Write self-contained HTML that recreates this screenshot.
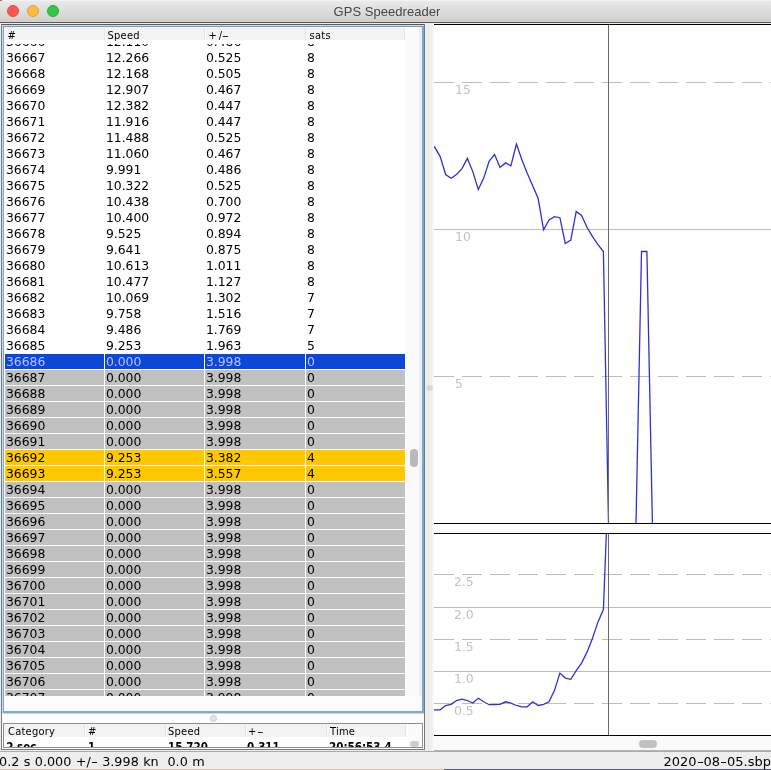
<!DOCTYPE html>
<html><head><meta charset="utf-8"><title>GPS Speedreader</title>
<style>
html,body{margin:0;padding:0}
body{width:771px;height:770px;position:relative;overflow:hidden;background:#ececec;font-family:"DejaVu Sans","Liberation Sans",sans-serif;font-size:13px;color:#000}
div,i,span{position:absolute;box-sizing:border-box;font-style:normal;white-space:nowrap}
#tb{left:0;top:0;width:771px;height:23px;background:linear-gradient(#f6f6f6 0,#e9e9e9 1.5px,#d6d6d6 17px,#d4d0cc 19px);border-bottom:1px solid #5c5c5c}
#tt{left:1.5px;width:771px;top:3px;height:18px;line-height:18px;text-align:center;font-family:"Liberation Sans",sans-serif;font-size:13px;color:#464646;letter-spacing:.05px}
.tl{top:5px;width:12px;height:12px;border-radius:50%}
#lp{left:1px;top:24px;width:424px;height:726px;border:1px solid #747a80;border-top-color:#505c69;background:#fff}
#fr{left:2px;top:25px;width:422px;height:689px;border:1px solid #c9dcee;background:#fff}
#fr2{left:3px;top:26px;width:421px;height:687px;border:1px solid #7fa6d0;border-top-color:#8399ae;border-right-width:2px;border-bottom-width:2px;background:#fff}
#vp{left:4px;top:27px;width:402px;height:669px;overflow:hidden;background:#fff}
#hd{left:0;top:0;width:402px;height:17px;background:linear-gradient(#f3f3f3 0,#f3f3f3 12.5px,#fff 13.5px);z-index:5}
.h{top:1px;height:16px;line-height:16px;font-size:11px;letter-spacing:.25px;font-family:"DejaVu Sans Condensed","DejaVu Sans",sans-serif}
.hy{display:inline-block;font-weight:normal;transform:scaleX(1.9);transform-origin:0 50%}
.hw{position:static;display:inline-block;font-weight:normal;width:7px;text-align:center;transform:scaleX(1.5)}
.hs{top:1px;width:1px;height:12px;background:#fbfbfb;border-left:1px solid #e4e4e4;width:2px}
.r{left:1px;width:400px;height:15px;line-height:15px;font-size:12.4px}
.r i{top:0;height:15px;padding-left:.9px}
.c1{left:0;width:99px}.c2{left:100px;width:99px}.c3{left:200px;width:100px}.c4{left:301px;width:99px}
.gry i{background:#c0c0c0}
.org i{background:#ffc800}
.sel i{background:#0c47d8;color:#b4c6ff}
#vs{left:406px;top:27px;width:16px;height:669px;background:#fafafa}
#vth{left:410px;top:449px;width:7.7px;height:18px;border-radius:4px;background:#bbb8be}
#hs{left:4px;top:696px;width:418px;height:15px;background:#fcfcfc}
#dv{left:2px;top:714px;width:422px;height:9px;background:#fdfdfd}
.dot{width:7px;height:7px;border-radius:50%;background:#e2e2e2;border:1px solid #cbcbcb}
#bp{left:3px;top:723px;width:420px;height:25px;border:1px solid #8e8e8e;background:#fff;overflow:hidden}
#bh .h{top:-.5px}
#bh{left:0;top:0;width:403px;height:16px;background:linear-gradient(#f3f3f3 0,#f3f3f3 13px,#fff 13px)}
.b{top:16.2px;font-weight:bold;height:15px;line-height:15px;font-size:11.5px;font-family:"DejaVu Sans Condensed","DejaVu Sans",sans-serif}
#sb{left:0;top:751px;width:771px;height:19px;background:#ededed;border-top:1px solid #ababab}
#sl{left:-1px;top:754px;height:16px;line-height:16px;font-size:12.8px;word-spacing:.3px}
#sr{right:0;top:754px;height:16px;line-height:16px}
#vd{left:425px;top:23px;width:9px;height:728px;background:linear-gradient(90deg,#e9eef5 0,#f1ebe4 35%,#eeeeee 65%,#fafafa 100%)}
#ch{left:434px;top:24px;width:337px;height:712px;background:#fff}
#cs{left:434px;top:736px;width:337px;height:15px;background:#fafafa;border-bottom:1px solid #b4b4b4}
#cth{left:639px;top:740px;width:18px;height:8px;border-radius:4px;background:#c1c1c1}
svg{position:absolute;left:0;top:0}
text{font-family:"DejaVu Sans",sans-serif;font-size:12.4px;fill:#c2c2c2}
</style></head><body>
<div id="root" style="left:0;top:0;width:771px;height:770px;will-change:transform">
<div id="tb"></div>
<div class="tl" style="left:7px;background:#fc5753;border:.5px solid #df4744"></div>
<div class="tl" style="left:27px;background:#fdbc40;border:.5px solid #de9f34"></div>
<div class="tl" style="left:47px;background:#33c748;border:.5px solid #27aa35"></div>
<div id="tt">GPS Speedreader</div>

<div id="lp"></div>
<div id="fr"></div>
<div id="fr2"></div>
<div id="vs"></div><div style="left:419px;top:27px;width:3px;height:684px;background:#e8f2fb"></div><div id="vth"></div>
<div id="hs"></div>
<div id="vp">
<div id="hd">
<span class="h" style="left:3.5px">#</span>
<span class="h" style="left:103.5px">Speed</span>
<span class="h" style="left:204.5px;letter-spacing:2px">+/<b class="hy" style="margin-left:-1.8px">-</b></span>
<span class="h" style="left:305.5px;letter-spacing:.3px">sats</span>
<div class="hs" style="left:99.5px"></div><div class="hs" style="left:199.5px"></div><div class="hs" style="left:301px"></div><div class="hs" style="left:400px"></div>
</div>
<div id="rows" style="left:0;top:-27px;width:402px;height:800px">
<div class="r" style="top:34px"><i class="c1">36666</i><i class="c2">12.110</i><i class="c3">0.486</i><i class="c4">8</i></div>
<div class="r" style="top:50px"><i class="c1">36667</i><i class="c2">12.266</i><i class="c3">0.525</i><i class="c4">8</i></div>
<div class="r" style="top:66px"><i class="c1">36668</i><i class="c2">12.168</i><i class="c3">0.505</i><i class="c4">8</i></div>
<div class="r" style="top:82px"><i class="c1">36669</i><i class="c2">12.907</i><i class="c3">0.467</i><i class="c4">8</i></div>
<div class="r" style="top:98px"><i class="c1">36670</i><i class="c2">12.382</i><i class="c3">0.447</i><i class="c4">8</i></div>
<div class="r" style="top:114px"><i class="c1">36671</i><i class="c2">11.916</i><i class="c3">0.447</i><i class="c4">8</i></div>
<div class="r" style="top:130px"><i class="c1">36672</i><i class="c2">11.488</i><i class="c3">0.525</i><i class="c4">8</i></div>
<div class="r" style="top:146px"><i class="c1">36673</i><i class="c2">11.060</i><i class="c3">0.467</i><i class="c4">8</i></div>
<div class="r" style="top:162px"><i class="c1">36674</i><i class="c2">9.991</i><i class="c3">0.486</i><i class="c4">8</i></div>
<div class="r" style="top:178px"><i class="c1">36675</i><i class="c2">10.322</i><i class="c3">0.525</i><i class="c4">8</i></div>
<div class="r" style="top:194px"><i class="c1">36676</i><i class="c2">10.438</i><i class="c3">0.700</i><i class="c4">8</i></div>
<div class="r" style="top:210px"><i class="c1">36677</i><i class="c2">10.400</i><i class="c3">0.972</i><i class="c4">8</i></div>
<div class="r" style="top:226px"><i class="c1">36678</i><i class="c2">9.525</i><i class="c3">0.894</i><i class="c4">8</i></div>
<div class="r" style="top:242px"><i class="c1">36679</i><i class="c2">9.641</i><i class="c3">0.875</i><i class="c4">8</i></div>
<div class="r" style="top:258px"><i class="c1">36680</i><i class="c2">10.613</i><i class="c3">1.011</i><i class="c4">8</i></div>
<div class="r" style="top:274px"><i class="c1">36681</i><i class="c2">10.477</i><i class="c3">1.127</i><i class="c4">8</i></div>
<div class="r" style="top:290px"><i class="c1">36682</i><i class="c2">10.069</i><i class="c3">1.302</i><i class="c4">7</i></div>
<div class="r" style="top:306px"><i class="c1">36683</i><i class="c2">9.758</i><i class="c3">1.516</i><i class="c4">7</i></div>
<div class="r" style="top:322px"><i class="c1">36684</i><i class="c2">9.486</i><i class="c3">1.769</i><i class="c4">7</i></div>
<div class="r" style="top:338px"><i class="c1">36685</i><i class="c2">9.253</i><i class="c3">1.963</i><i class="c4">5</i></div>
<div class="r sel" style="top:354px"><i class="c1">36686</i><i class="c2">0.000</i><i class="c3">3.998</i><i class="c4">0</i></div>
<div class="r gry" style="top:370px"><i class="c1">36687</i><i class="c2">0.000</i><i class="c3">3.998</i><i class="c4">0</i></div>
<div class="r gry" style="top:386px"><i class="c1">36688</i><i class="c2">0.000</i><i class="c3">3.998</i><i class="c4">0</i></div>
<div class="r gry" style="top:402px"><i class="c1">36689</i><i class="c2">0.000</i><i class="c3">3.998</i><i class="c4">0</i></div>
<div class="r gry" style="top:418px"><i class="c1">36690</i><i class="c2">0.000</i><i class="c3">3.998</i><i class="c4">0</i></div>
<div class="r gry" style="top:434px"><i class="c1">36691</i><i class="c2">0.000</i><i class="c3">3.998</i><i class="c4">0</i></div>
<div class="r org" style="top:450px"><i class="c1">36692</i><i class="c2">9.253</i><i class="c3">3.382</i><i class="c4">4</i></div>
<div class="r org" style="top:466px"><i class="c1">36693</i><i class="c2">9.253</i><i class="c3">3.557</i><i class="c4">4</i></div>
<div class="r gry" style="top:482px"><i class="c1">36694</i><i class="c2">0.000</i><i class="c3">3.998</i><i class="c4">0</i></div>
<div class="r gry" style="top:498px"><i class="c1">36695</i><i class="c2">0.000</i><i class="c3">3.998</i><i class="c4">0</i></div>
<div class="r gry" style="top:514px"><i class="c1">36696</i><i class="c2">0.000</i><i class="c3">3.998</i><i class="c4">0</i></div>
<div class="r gry" style="top:530px"><i class="c1">36697</i><i class="c2">0.000</i><i class="c3">3.998</i><i class="c4">0</i></div>
<div class="r gry" style="top:546px"><i class="c1">36698</i><i class="c2">0.000</i><i class="c3">3.998</i><i class="c4">0</i></div>
<div class="r gry" style="top:562px"><i class="c1">36699</i><i class="c2">0.000</i><i class="c3">3.998</i><i class="c4">0</i></div>
<div class="r gry" style="top:578px"><i class="c1">36700</i><i class="c2">0.000</i><i class="c3">3.998</i><i class="c4">0</i></div>
<div class="r gry" style="top:594px"><i class="c1">36701</i><i class="c2">0.000</i><i class="c3">3.998</i><i class="c4">0</i></div>
<div class="r gry" style="top:610px"><i class="c1">36702</i><i class="c2">0.000</i><i class="c3">3.998</i><i class="c4">0</i></div>
<div class="r gry" style="top:626px"><i class="c1">36703</i><i class="c2">0.000</i><i class="c3">3.998</i><i class="c4">0</i></div>
<div class="r gry" style="top:642px"><i class="c1">36704</i><i class="c2">0.000</i><i class="c3">3.998</i><i class="c4">0</i></div>
<div class="r gry" style="top:658px"><i class="c1">36705</i><i class="c2">0.000</i><i class="c3">3.998</i><i class="c4">0</i></div>
<div class="r gry" style="top:674px"><i class="c1">36706</i><i class="c2">0.000</i><i class="c3">3.998</i><i class="c4">0</i></div>
<div class="r gry" style="top:690px"><i class="c1">36707</i><i class="c2">0.000</i><i class="c3">3.998</i><i class="c4">0</i></div>
</div>
</div>

<div id="dv"></div>
<div class="dot" style="left:209.5px;top:714.5px"></div>
<div id="bp">
<div id="bh">
<span class="h" style="left:4px">Category</span>
<span class="h" style="left:84px">#</span>
<span class="h" style="left:164px">Speed</span>
<span class="h" style="left:244px">+<b class="hy">-</b></span>
<span class="h" style="left:326px">Time</span>
<div class="hs" style="left:80px"></div><div class="hs" style="left:161px"></div><div class="hs" style="left:241px"></div><div class="hs" style="left:322px"></div><div class="hs" style="left:401px"></div>
</div>
<span class="b" style="left:2.2px">2 sec</span>
<span class="b" style="left:84px">1</span>
<span class="b" style="left:164px">15.720</span>
<span class="b" style="left:243px">0.311</span>
<span class="b" style="left:325px">20:56:53.4</span>
<div style="left:404px;top:0;width:16px;height:24px;background:#fafafa"></div>
<div style="left:405.5px;top:16.5px;width:9px;height:6px;border-radius:3px;background:#cdcdcd"></div>
</div>

<div id="vd"></div>
<div class="dot" style="left:426px;top:384.5px;width:6.5px;height:6.5px;background:#d6d6d6;border-color:#e0e0e0"></div>

<div id="ch"></div><div style="left:434px;top:524px;width:337px;height:9px;background:#fdfdfd"></div>
<svg width="771" height="770" viewBox="0 0 771 770">
<defs>
<clipPath id="k1"><rect x="434" y="25" width="337" height="498"/></clipPath>
<clipPath id="k2"><rect x="434" y="534" width="337" height="201.5"/></clipPath>
</defs>
<g fill="none" stroke="#bdbdbd" stroke-width="1" shape-rendering="crispEdges">
<path d="M434 82.5H771M434 376.5H771" stroke-dasharray="20 8"/>
<path d="M434 229.5H771"/>
<path d="M434 574.5H771M434 639.5H771M434 703.5H771" stroke-dasharray="20 8"/>
<path d="M434 607.5H771M434 671.5H771"/>
</g>
<g>
<text x="455" y="94">15</text>
<text x="455" y="241">10</text>
<text x="455" y="388">5</text>
<text x="454" y="586">2.5</text>
<text x="454" y="619">2.0</text>
<text x="454" y="651">1.5</text>
<text x="454" y="683">1.0</text>
<text x="454" y="715">0.5</text>
</g>
<path clip-path="url(#k1)" d="M429.3 142.8 L434.8 147.3 L440.2 156.6 L445.6 174.5 L451.1 178.3 L456.5 174.5 L462.0 168.6 L467.4 158.4 L472.8 171.6 L478.3 189.5 L483.7 178.1 L489.2 161.0 L494.6 154.5 L500.0 167.5 L505.5 162.9 L510.9 165.8 L516.4 144.0 L521.8 159.5 L527.2 173.2 L532.7 185.8 L538.1 198.3 L543.6 229.8 L549.0 220.0 L554.4 216.6 L559.9 217.7 L565.3 243.5 L570.8 240.1 L576.2 211.5 L581.6 215.5 L587.1 227.5 L592.5 236.6 L598.0 244.6 L603.4 251.5 L608.5 523.5M636.0 523.5 L641.5 251.5 L646.9 251.5 L652.4 523.5" fill="none" stroke="#3030d4" stroke-width="1.3" stroke-linejoin="miter"/>
<polyline clip-path="url(#k2)" points="429.3,709.8 434.8,709.8 440.2,709.8 445.6,705.5 451.1,704.3 456.5,700.5 462.0,699.2 467.4,700.5 472.8,703.1 478.3,698.3 483.7,701.8 489.2,704.7 494.6,704.7 500.0,704.3 505.5,701.8 510.9,703.1 516.4,705.5 521.8,706.8 527.2,706.8 532.7,701.8 538.1,705.5 543.6,704.3 549.0,701.8 554.4,690.6 559.9,673.1 565.3,678.1 570.8,679.3 576.2,670.6 581.6,663.1 587.1,651.9 592.5,638.2 598.0,621.9 603.4,609.5 608.5,478.8 614.3,478.8 619.7,478.8 625.2,478.8 630.6,478.8 636.0,478.8 641.5,518.4 646.9,507.1 652.4,478.8 657.8,478.8 663.2,478.8 668.7,478.8 674.1,478.8 679.6,478.8 685.0,478.8 690.4,478.8 695.9,478.8 701.3,478.8 706.8,478.8 712.2,478.8 717.6,478.8 723.1,478.8 728.5,478.8 734.0,478.8 739.4,478.8 744.8,478.8 750.3,478.8 755.7,478.8 761.2,478.8 766.6,478.8 772.0,478.8 777.5,478.8 782.9,478.8 788.4,478.8" fill="none" stroke="#3030d4" stroke-width="1.3" stroke-linejoin="miter"/>
<path d="M608.5 25V523M608.5 534V735" stroke="#6a6a6a" stroke-width="1" fill="none" shape-rendering="crispEdges"/>
<path d="M434 24.5H771M434 523.5H771M434 533.5H771M434 735.5H771" stroke="#000" stroke-width="1" fill="none" shape-rendering="crispEdges"/>
</svg>
<div id="cs"></div><div id="cth"></div>

<div id="sb"></div>
<div style="left:0;top:769px;width:444px;height:1px;background:#cdc0ad"></div><div style="left:444px;top:769px;width:327px;height:1px;background:#5a5d6c"></div>
<div style="left:0;top:0;width:2px;height:1px;background:#777"></div>
<span id="sl">0.2 s 0.000 +/<b class="hw">-</b> 3.998 kn&nbsp; 0.0 m</span>
<span id="sr">2020<b class="hw">-</b>08<b class="hw">-</b>05.sbp</span>
</div>
</body></html>
